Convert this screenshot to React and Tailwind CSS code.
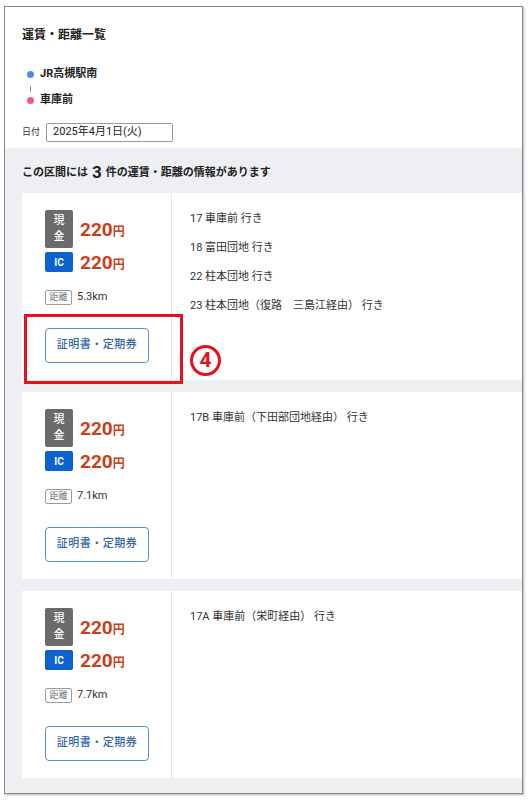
import React from 'react';

const routes = [
  {
    dist: '5.3km',
    lines: ['17 車庫前 行き', '18 富田団地 行き', '22 柱本団地 行き', '23 柱本団地（復路　三島江経由） 行き'],
  },
  { dist: '7.1km', lines: ['17B 車庫前（下田部団地経由） 行き'] },
  { dist: '7.7km', lines: ['17A 車庫前（栄町経由） 行き'] },
];

const Price = () => (
  <span className="text-[#c8411b] font-bold leading-none">
    <span className="text-[19px]">220</span>
    <span className="text-[12px]">円</span>
  </span>
);

const FareCard = ({ route }) => (
  <div className="flex bg-white ml-[17px]">
    <div className="w-[150px] shrink-0 pl-[23px] pt-[17px] pb-[17px] border-r border-[#e3e5e8]">
      <div className="flex items-center gap-[7px]">
        <div className="w-[28px] h-[38px] bg-[#6b6b6b] rounded-[2px] flex flex-col items-center justify-center text-white text-[11px] leading-[16px] font-medium">
          <span>現</span>
          <span>金</span>
        </div>
        <Price />
      </div>
      <div className="flex items-center gap-[7px] mt-[4px]">
        <div className="w-[28px] h-[20px] bg-[#0b63d0] rounded-[2px] flex items-center justify-center text-white text-[10px] font-bold">
          IC
        </div>
        <Price />
      </div>
      <div className="flex items-center gap-[5px] mt-[18px] h-[15px]">
        <span className="w-[27px] h-[15px] border border-[#9a9a9a] rounded-[2px] text-[9px] text-[#777] flex items-center justify-center">
          距離
        </span>
        <span className="text-[11px] text-[#333]">{route.dist}</span>
      </div>
      <button className="mt-[23px] w-[104px] h-[35px] border border-[#5d8fd0] rounded-[4px] text-[11px] text-[#3366aa] font-medium tracking-[0.5px] bg-white">
        証明書・定期券
      </button>
    </div>
    <div className="flex-1 pl-[18px] pt-[18px] flex flex-col gap-[13px]">
      {route.lines.map((l) => (
        <div key={l} className="text-[11px] leading-[16px] text-[#333]">
          {l}
        </div>
      ))}
    </div>
  </div>
);

export default function App() {
  return (
    <div
      className="relative bg-white pt-[6px] pl-[4px] pb-[4px]"
      style={{ fontFamily: 'Roboto, "Noto Sans CJK JP", sans-serif' }}
    >
      <div className="w-[519px] h-[788px] border border-[#888] shadow-[1px_1px_2px_rgba(0,0,0,0.3)] flex flex-col overflow-hidden">
        <div className="bg-white pl-[17px] pt-[20px] pb-[6px]">
          <h1 className="text-[12px] leading-[16px] font-bold text-[#222]">運賃・距離一覧</h1>
          <div className="mt-[23px] pl-[5px]">
            <div className="flex items-center h-[16px] gap-[6px]">
              <span className="w-[7px] h-[7px] rounded-full bg-[#4a90e2]" />
              <span className="text-[11px] font-bold text-[#222]">JR高槻駅南</span>
            </div>
            <div className="ml-[3px] mt-[4px] w-px h-[6px] bg-[#999]" />
            <div className="flex items-center h-[16px] gap-[6px]">
              <span className="w-[7px] h-[7px] rounded-full bg-[#ee5a8a]" />
              <span className="text-[11px] font-bold text-[#222]">車庫前</span>
            </div>
          </div>
          <div className="flex items-center gap-[6px] mt-[15px]">
            <span className="text-[9px] text-[#333]">日付</span>
            <div className="w-[127px] h-[19px] border border-[#9a9a9a] rounded-[2px] px-[6px] flex items-center text-[11px] text-[#222]">
              2025年4月1日(火)
            </div>
          </div>
        </div>
        <div className="flex-1 bg-[#edeff2] pt-[15px]">
          <div className="pl-[17px] h-[20px] flex items-center text-[11px] font-bold text-[#222]">
            この区間には
            <span className="text-[17px] mx-[4px]">3</span>
            件の運賃・距離の情報があります
          </div>
          <div className="mt-[10px] flex flex-col gap-[12px]">
            {routes.map((r) => (
              <FareCard key={r.dist} route={r} />
            ))}
          </div>
        </div>
      </div>
      <div className="absolute left-[24px] top-[314px] w-[159px] h-[70px] border-[3px] border-[#e8101a]" />
      <div className="absolute left-[190px] top-[345px] w-[31px] h-[31px] rounded-full border-[3px] border-[#e8101a] flex items-center justify-center text-[21px] leading-none font-bold text-[#e8101a]">
        4
      </div>
    </div>
  );
}
